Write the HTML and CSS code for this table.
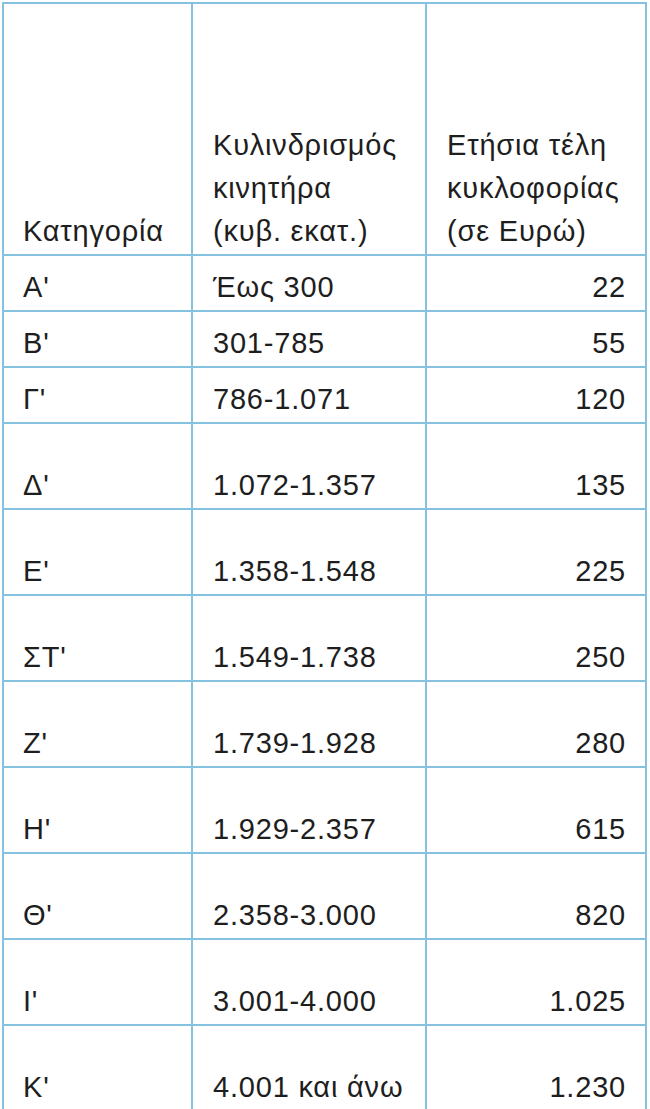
FILE: index.html
```html
<!DOCTYPE html>
<html lang="el">
<head>
<meta charset="utf-8">
<title>Τέλη κυκλοφορίας</title>
<link rel="stylesheet" href="styles.css">
</head>
<body>
<table class="fees">
  <colgroup>
    <col class="c1">
    <col class="c2">
    <col class="c3">
  </colgroup>
  <thead>
    <tr class="head">
      <th>Κατηγορία</th>
      <th>Κυλινδρισμός<br>κινητήρα<br>(κυβ. εκατ.)</th>
      <th>Ετήσια τέλη<br>κυκλοφορίας<br>(σε Ευρώ)</th>
    </tr>
  </thead>
  <tbody>
    <tr class="short"><td>Α'</td><td>Έως 300</td><td class="num">22</td></tr>
    <tr class="short"><td>Β'</td><td>301-785</td><td class="num">55</td></tr>
    <tr class="short"><td>Γ'</td><td>786-1.071</td><td class="num">120</td></tr>
    <tr class="tall"><td>Δ'</td><td>1.072-1.357</td><td class="num">135</td></tr>
    <tr class="tall"><td>Ε'</td><td>1.358-1.548</td><td class="num">225</td></tr>
    <tr class="tall"><td>ΣΤ'</td><td>1.549-1.738</td><td class="num">250</td></tr>
    <tr class="tall"><td>Ζ'</td><td>1.739-1.928</td><td class="num">280</td></tr>
    <tr class="tall"><td>Η'</td><td>1.929-2.357</td><td class="num">615</td></tr>
    <tr class="tall"><td>Θ'</td><td>2.358-3.000</td><td class="num">820</td></tr>
    <tr class="tall"><td>Ι'</td><td>3.001-4.000</td><td class="num">1.025</td></tr>
    <tr class="tall"><td>Κ'</td><td>4.001 και άνω</td><td class="num">1.230</td></tr>
  </tbody>
</table>
</body>
</html>
```
FILE: styles.css
```css
html, body {
  margin: 0;
  padding: 0;
  background: #ffffff;
}

body {
  padding: 2px 0 0 2px;
  font-family: "Liberation Sans", Arial, sans-serif;
  font-size: 29px;
  letter-spacing: 0.8px;
  color: #1e1e1e;
}

.fees {
  border-collapse: collapse;
  table-layout: fixed;
  width: 643px;
}

.c1 { width: 189px; }
.c2 { width: 234px; }
.c3 { width: 220px; }

.fees th,
.fees td {
  border: 2px solid #84c2e0;
  padding: 0 19px 1px 19px;
  vertical-align: bottom;
  text-align: left;
  font-weight: normal;
  line-height: 43px;
  white-space: nowrap;
}

.fees th:nth-child(n+2),
.fees td:nth-child(n+2) {
  padding-left: 20px;
}

.fees td.num {
  text-align: right;
}

.head { height: 252px; }
.short { height: 56px; }
.tall { height: 86px; }
```
